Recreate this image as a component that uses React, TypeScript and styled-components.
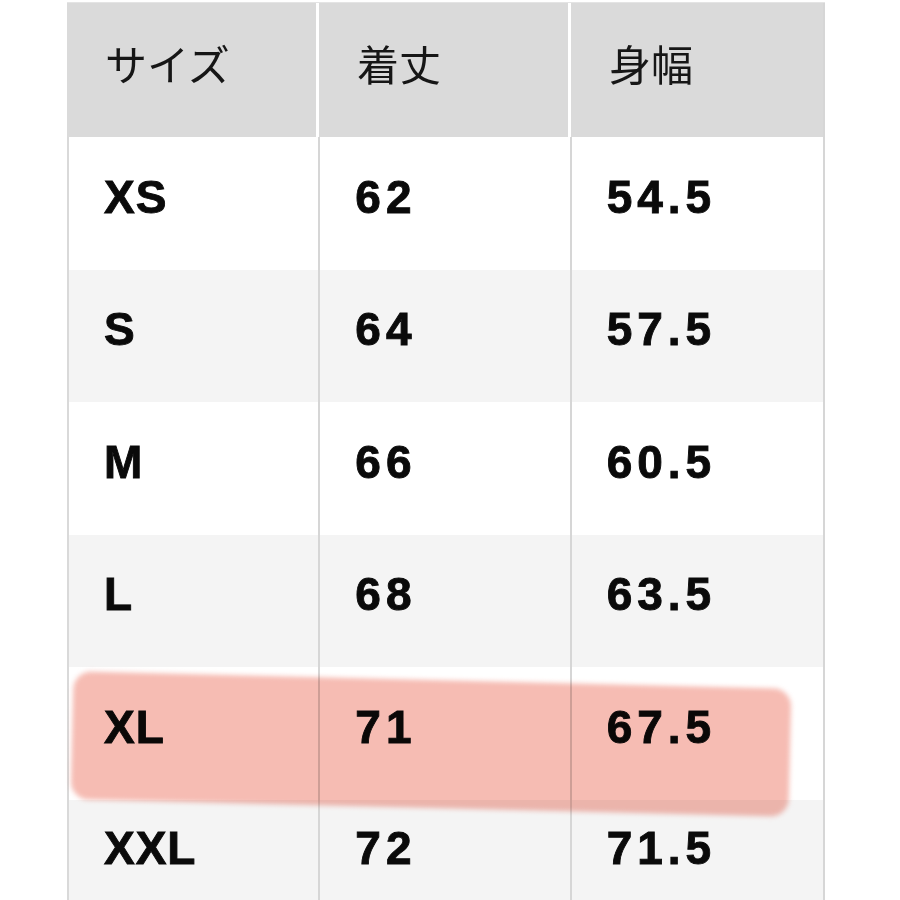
import styled, { createGlobalStyle } from "styled-components";

const GlobalStyle = createGlobalStyle`
  html, body {
    margin: 0;
    padding: 0;
    background: #ffffff;
  }
  body {
    font-family: "Liberation Sans", "Noto Sans CJK JP", sans-serif;
  }
`;

interface Size {
  name: string;
  length: string;
  width: string;
  highlight?: boolean;
}

const sizes: Size[] = [
  { name: "XS", length: "62", width: "54.5" },
  { name: "S", length: "64", width: "57.5" },
  { name: "M", length: "66", width: "60.5" },
  { name: "L", length: "68", width: "63.5" },
  { name: "XL", length: "71", width: "67.5", highlight: true },
  { name: "XXL", length: "72", width: "71.5" }
];

const rowHeights = [133, 132, 133, 132, 133, 110];

const App = () => {
  return (
    <>
      <GlobalStyle />
      <Page>
        <Table>
          <HeaderRow>
            <HeadCell>サイズ</HeadCell>
            <HeadCell>着丈</HeadCell>
            <HeadCell $last>身幅</HeadCell>
          </HeaderRow>
          {sizes.map((s, i) => (
            <Row key={s.name} $striped={i % 2 === 1} $height={rowHeights[i]}>
              {s.highlight && <Highlight />}
              <Cell>{s.name}</Cell>
              <Cell $numeric>{s.length}</Cell>
              <Cell $numeric $last>
                {s.width}
              </Cell>
            </Row>
          ))}
        </Table>
      </Page>
    </>
  );
};

const Page = styled.div`
  width: 900px;
  height: 900px;
  overflow: hidden;
  padding: 2px 0 0 67px;
  box-sizing: border-box;
`;

const Table = styled.div`
  width: 758px;
  display: flex;
  flex-direction: column;
  border-top: 1px solid #e4e4e4;
`;

const HeaderRow = styled.div`
  display: flex;
  height: 134px;
  background: #dadada;
`;

const HeadCell = styled.div<{ $last?: boolean }>`
  width: ${({ $last }) => ($last ? 254 : 252)}px;
  box-sizing: border-box;
  padding: 0 0 16px 38px;
  display: flex;
  align-items: center;
  font-family: "Noto Sans CJK JP", sans-serif;
  font-size: 42px;
  font-weight: 400;
  color: #161616;
  border-right: ${({ $last }) => ($last ? "2px solid #d6d6d6" : "3px solid #ffffff")};
`;

const Row = styled.div<{ $striped: boolean; $height: number }>`
  position: relative;
  display: flex;
  height: ${({ $height }) => $height}px;
  background: ${({ $striped }) => ($striped ? "#f4f4f4" : "#ffffff")};
  border-left: 2px solid #d9d9d9;
  box-sizing: border-box;
`;

const Cell = styled.div<{ $last?: boolean; $numeric?: boolean }>`
  width: ${({ $last }) => ($last ? 254 : 252)}px;
  box-sizing: border-box;
  padding: 0 0 14px 35px;
  display: flex;
  align-items: center;
  font-family: "Liberation Sans", "DejaVu Sans", sans-serif;
  font-size: 46px;
  font-weight: 700;
  letter-spacing: ${({ $numeric }) => ($numeric ? 5 : 1)}px;
  -webkit-text-stroke: 0.9px #0a0a0a;
  color: #0a0a0a;
  border-right: 2px solid #d6d6d6;
`;

const Highlight = styled.div`
  position: absolute;
  z-index: 2;
  left: 3px;
  top: 13px;
  width: 718px;
  height: 128px;
  border-radius: 18px;
  background: #f6bcb3;
  mix-blend-mode: multiply;
  filter: blur(2.5px);
  transform: rotate(1.4deg);
  pointer-events: none;
`;

export default App;
